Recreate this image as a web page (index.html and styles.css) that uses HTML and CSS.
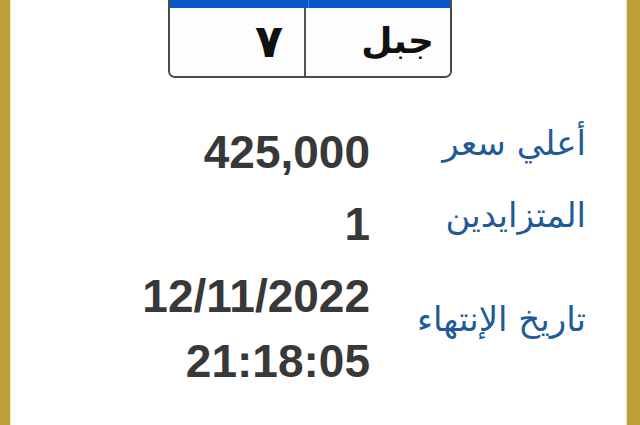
FILE: index.html
```html
<!DOCTYPE html>
<html lang="ar">
<head>
<meta charset="utf-8">
<link rel="stylesheet" href="styles.css">
</head>
<body>
<div class="frame">
  <div class="content">
    <div class="plate">
      <div class="plate-head"><span></span><span></span></div>
      <div class="plate-body">
        <div class="cell num">٧</div>
        <div class="cell letters">جبل</div>
      </div>
    </div>
    <div class="details">
      <div class="value">425,000</div>
      <div class="label">أعلي سعر</div>
      <div class="value">1</div>
      <div class="label">المتزايدين</div>
      <div class="value">12/11/2022<br>21:18:05</div>
      <div class="label">تاريخ الإنتهاء</div>
    </div>
  </div>
</div>
</body>
</html>
```
FILE: styles.css
```css
html, body {
  margin: 0;
  padding: 0;
  background: #ffffff;
}
.frame {
  width: 640px;
  height: 425px;
  box-sizing: border-box;
  border-left: 10px solid #bf9f3a;
  border-right: 13px solid #bf9f3a;
  overflow: hidden;
}
.content {
  position: relative;
  height: 100%;
  box-shadow: inset 1px 0 0 #f3e6b8, inset -1px 0 0 #f3e6b8;
}
.plate {
  margin-left: 158px;
  width: 284px;
  height: 78px;
  box-sizing: border-box;
  border: 2px solid #4a4a4a;
  border-top: none;
  border-radius: 0 0 7px 7px;
  overflow: hidden;
  display: flex;
  flex-direction: column;
}
.plate-head {
  height: 8px;
  background: #0656c6;
  display: flex;
}
.plate-head span:first-child {
  width: 138px;
  border-right: 1px solid #3f77d0;
}
.plate-body {
  flex: 1;
  display: flex;
  background: #fdfdfd;
}
.cell {
  font-family: "DejaVu Sans", sans-serif;
  font-weight: bold;
  color: #111;
  text-align: right;
  line-height: 66px;
}
.num {
  width: 136px;
  border-right: 2px solid #555;
  font-size: 46px;
  padding-right: 21px;
  box-sizing: border-box;
}
.letters {
  flex: 1;
  font-size: 36px;
  padding-right: 16px;
}
.details {
  display: grid;
  grid-template-columns: 360px 216px;
  row-gap: 7px;
  margin-top: 42px;
}
.value {
  font-family: "Liberation Sans", Arial, sans-serif;
  font-weight: bold;
  font-size: 46px;
  line-height: 65px;
  color: #383838;
  text-align: right;
}
.label {
  font-family: "DejaVu Sans", sans-serif;
  font-size: 34px;
  color: #1f5b98;
  text-align: right;
  direction: rtl;
  align-self: center;
  margin-bottom: 20px;
}
```
